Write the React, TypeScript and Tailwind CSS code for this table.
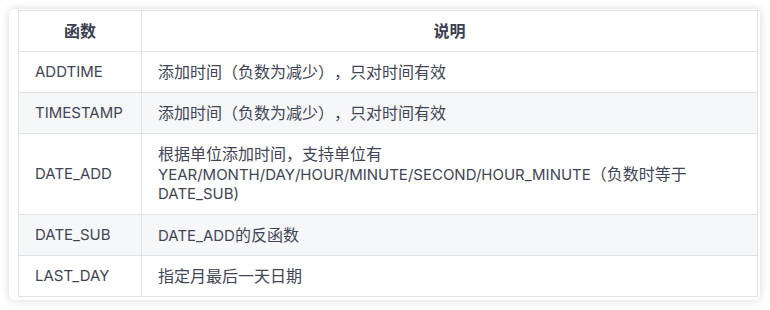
import React from "react";

const font = { fontFamily: 'Inter, "Noto Sans CJK SC", "Noto Sans", sans-serif' };

function Mixed({ text }: { text: string }) {
  const parts = text.match(/[\u3000-\u303f\u4e00-\u9fff\uff00-\uffef]+|[^\u3000-\u303f\u4e00-\u9fff\uff00-\uffef]+/g) || [];
  return (
    <>
      {parts.map((p, i) =>
        /[\u3000-\u303f\u4e00-\u9fff\uff00-\uffef]/.test(p) ? (
          <span key={i} className="text-[16px] leading-[20px] [text-spacing-trim:space-all]">
            {p}
          </span>
        ) : (
          <span key={i}>{p}</span>
        )
      )}
    </>
  );
}

const rows: { name: string; lines: string[] }[] = [
  { name: "ADDTIME", lines: ["添加时间（负数为减少），只对时间有效"] },
  { name: "TIMESTAMP", lines: ["添加时间（负数为减少），只对时间有效"] },
  {
    name: "DATE_ADD",
    lines: [
      "根据单位添加时间，支持单位有",
      "YEAR/MONTH/DAY/HOUR/MINUTE/SECOND/HOUR_MINUTE（负数时等于",
      "DATE_SUB)",
    ],
  },
  { name: "DATE_SUB", lines: ["DATE_ADD的反函数"] },
  { name: "LAST_DAY", lines: ["指定月最后一天日期"] },
];

export default function App() {
  return (
    <div className="w-[770px] h-[310px] bg-white pt-[9px] pl-[9px]" style={font}>
      <div className="w-[751px] h-[291px] rounded-[5px] bg-white shadow-[0_0_9px_rgba(0,0,0,0.16)] pl-[9px] pr-[2px] pt-px">
        <table className="w-[740px] border-collapse text-[15px] leading-[20px] text-[#3f4555] [text-spacing-trim:space-all]">
          <thead>
            <tr>
              <th className="w-[123px] border border-[#dfe2e7] py-[10px] font-semibold text-[#3a4050] text-center">
                <div className="h-[20px] overflow-visible">
                  <Mixed text="函数" />
                </div>
              </th>
              <th className="border border-[#dfe2e7] py-[10px] font-semibold text-[#3a4050] text-center">
                <div className="h-[20px] overflow-visible">
                  <Mixed text="说明" />
                </div>
              </th>
            </tr>
          </thead>
          <tbody>
            {rows.map((r, i) => (
              <tr key={r.name} className={i % 2 === 1 ? "bg-[#f6f7f9]" : "bg-white"}>
                <td className="border border-[#dfe2e7] px-[16px] py-[10px] align-middle whitespace-nowrap">
                  <div className="h-[20px]">{r.name}</div>
                </td>
                <td className="border border-[#dfe2e7] px-[16px] py-[10px] align-middle">
                  {r.lines.map((l, j) => (
                    <div key={j} className="h-[20px] whitespace-nowrap">
                      <Mixed text={l} />
                    </div>
                  ))}
                </td>
              </tr>
            ))}
          </tbody>
        </table>
      </div>
    </div>
  );
}
